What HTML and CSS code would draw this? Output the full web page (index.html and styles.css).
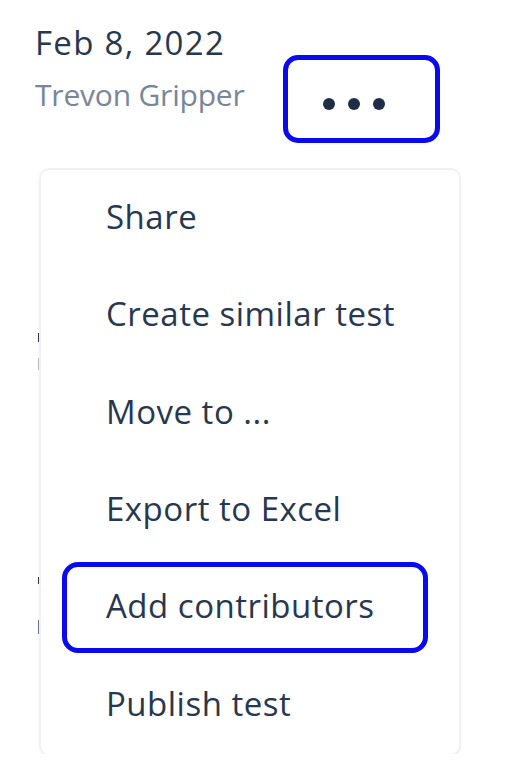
FILE: index.html
```html
<!DOCTYPE html>
<html lang="en">
<head>
    <meta charset="UTF-8">
    <meta name="viewport" content="width=device-width, initial-scale=1.0">
    <title>Test actions</title>
    <link rel="stylesheet" href="styles.css">
</head>
<body>
    <div class="test-header">
        <div class="test-meta">
            <div class="test-date">Feb 8, 2022</div>
            <div class="test-author">Trevon Gripper</div>
        </div>
        <button class="more-btn" type="button" aria-label="More actions">
            <span class="dot"></span>
            <span class="dot"></span>
            <span class="dot"></span>
        </button>
    </div>
    <div class="behind">
        <!-- bits of the list underneath that stick out past the menu -->
        <span class="peek peek-comma"></span>
        <span class="peek peek-dots"></span>
        <span class="peek peek-tick"></span>
        <span class="peek peek-curve"></span>
        <ul class="menu">
            <li class="menu-item"><span class="menu-label">Share</span></li>
            <li class="menu-item"><span class="menu-label">Create similar test</span></li>
            <li class="menu-item"><span class="menu-label">Move to ...</span></li>
            <li class="menu-item"><span class="menu-label">Export to Excel</span></li>
            <li class="menu-item focused"><span class="menu-label">Add contributors</span></li>
            <li class="menu-item"><span class="menu-label">Publish test</span></li>
        </ul>
    </div>
</body>
</html>
```

FILE: styles.css
```css
body {
    font-family: "Open Sans", Lato, sans-serif;
    background-color: #fff;
    color: #283750;
    margin: 0;
}

.test-header {
    display: flex;
    align-items: flex-start;
    padding: 21px 0 0 35px;
    height: 145px;
    box-sizing: border-box;
}

.test-meta {
    width: 248px;
}

.test-date {
    font-size: 33px;
    line-height: 44px;
    letter-spacing: 1.3px;
}

.test-author {
    font-size: 30px;
    line-height: 59px;
    letter-spacing: -0.2px;
    color: #77869a;
}

.more-btn {
    margin-top: 34px;
    width: 157px;
    height: 88px;
    border: 5px solid #0a0af0;
    border-radius: 15px;
    background: #fff;
    display: flex;
    align-items: center;
    justify-content: center;
    gap: 13px;
    padding: 10px 16px 0 0;
    box-sizing: border-box;
}

.dot {
    width: 12px;
    height: 12px;
    border-radius: 50%;
    background-color: #1f2d45;
}

.behind {
    position: relative;
    padding: 25px 0 0 41px;
}

.peek {
    position: absolute;
    left: 38px;
    width: 4px;
    background-color: #283750;
}

.peek-comma { top: 188px; height: 9px; border-radius: 0 2px 2px 0; }
.peek-dots { top: 213px; height: 12px; width: 3px; background-color: #b8c0cc; }
.peek-tick { top: 432px; height: 7px; width: 3px; }
.peek-curve { top: 475px; height: 14px; width: 3px; background-color: #6a778a; }

.menu {
    position: relative;
    list-style: none;
    margin: 0;
    padding: 0;
    width: 418px;
    background-color: #fff;
    border-radius: 8px;
    box-shadow: 0 0 0 2px #f0f1f3, 0 2px 6px rgba(0, 0, 0, 0.06);
}

.menu-item {
    height: 97.3px;
    padding: 3px 31px 3px 21px;
    box-sizing: border-box;
    display: flex;
}

.menu-label {
    flex: 1;
    display: flex;
    align-items: center;
    padding: 0 0 4px 39px;
    border: 5px solid transparent;
    border-radius: 16px;
    font-size: 33px;
    letter-spacing: 0.5px;
}

.menu-item.focused .menu-label {
    border-color: #0a0af0;
}
```
